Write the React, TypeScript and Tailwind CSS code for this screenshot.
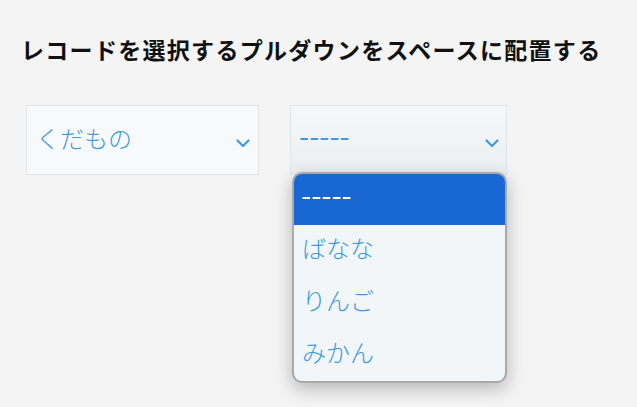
import React from 'react';

const font = { fontFamily: '"Noto Sans CJK JP", "Noto Sans", sans-serif' };
const dashFont = { fontFamily: '"DejaVu Sans", sans-serif' };

function Chevron() {
  return (
    <svg width="14" height="9" viewBox="0 0 14 9" className="shrink-0">
      <path d="M1.5 1.5 L7 7 L12.5 1.5" fill="none" stroke="#3a9be0" strokeWidth="2.2" strokeLinecap="round" strokeLinejoin="round" />
    </svg>
  );
}

function Dashes({ className }: { className: string }) {
  return (
    <span className={`inline-block origin-left scale-x-[1.17] text-[24px] leading-none ${className}`} style={dashFont}>
      -----
    </span>
  );
}

export default function App() {
  const options = ['ばなな', 'りんご', 'みかん'];
  return (
    <div className="w-[637px] h-[407px] bg-[#f4f4f4] overflow-hidden" style={font}>
      <div className="pt-[33px] pl-[21px]">
        <h1 className="text-[23px] font-bold text-[#111] leading-[32px] tracking-[1.3px]">
          レコードを選択するプルダウンをスペースに配置する
        </h1>
      </div>
      <div className="flex gap-[31px] pl-[26px] pt-[40px]">
        <div className="w-[233px] h-[70px] bg-[#f7f9fb] border border-[#e2e4e6] flex items-center justify-between pl-[9px] pr-[8px]">
          <span className="text-[24px] font-light text-[#3a9be0] pb-[4px]">くだもの</span>
          <div className="pt-[6px]"><Chevron /></div>
        </div>
        <div className="relative">
          <div className="w-[217px] h-[70px] bg-gradient-to-b from-[#f5f7f9] to-[#eceef0] border border-[#e2e4e6] flex items-center justify-between pl-[8px] pr-[7px]">
            <Dashes className="text-[#3a9be0] pb-[5px]" />
            <div className="pt-[6px]"><Chevron /></div>
          </div>
          <div className="absolute left-[2px] top-[67px] w-[215px] rounded-[10px] border-2 border-[#a9a9a9] bg-[#f2f6f8] overflow-hidden shadow-[0_6px_18px_rgba(0,0,0,0.25)]">
            <div className="h-[51px] bg-[#1967d2] flex items-center pl-[7px] pb-[5px]">
              <Dashes className="text-white" />
            </div>
            {options.map(o => (
              <div key={o} className="h-[52px] flex items-center pl-[8px] pb-[6px] text-[24px] font-light text-[#3a9be0]">{o}</div>
            ))}
          </div>
        </div>
      </div>
    </div>
  );
}
